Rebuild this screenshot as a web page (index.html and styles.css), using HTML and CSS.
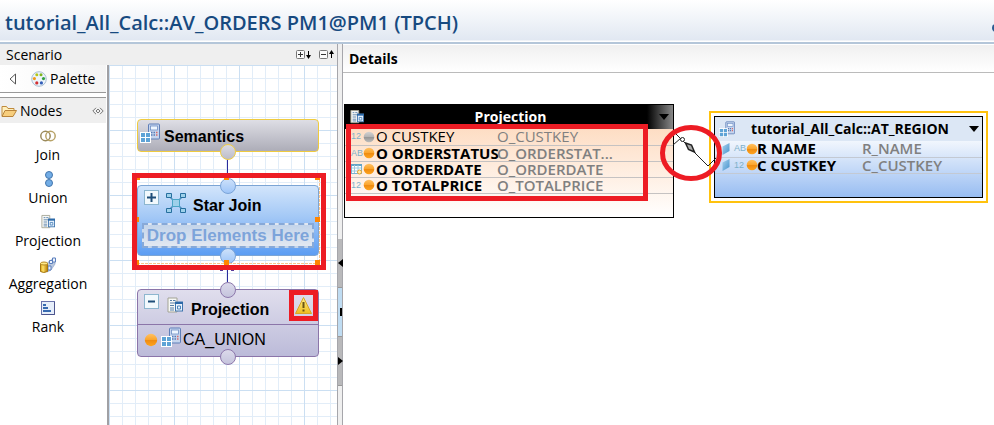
FILE: index.html
```html
<!DOCTYPE html>
<html lang="en">
<head>
<meta charset="utf-8">
<title>tutorial_All_Calc::AV_ORDERS PM1@PM1 (TPCH)</title>
<link rel="stylesheet" href="styles.css">
</head>
<body>
<svg class="defs" width="0" height="0" aria-hidden="true">
  <defs>
    <linearGradient id="g-orange" x1="0" y1="0" x2="0" y2="1"><stop offset="0" stop-color="#ffc163"/><stop offset=".48" stop-color="#fba52c"/><stop offset=".5" stop-color="#ee8a10"/><stop offset="1" stop-color="#ffa51f"/></linearGradient>
    <linearGradient id="g-gray" x1="0" y1="0" x2="0" y2="1"><stop offset="0" stop-color="#d2d2d2"/><stop offset=".48" stop-color="#b5b5b5"/><stop offset=".5" stop-color="#949494"/><stop offset="1" stop-color="#bcbcbc"/></linearGradient>
    <linearGradient id="g-steel" x1="0" y1="0" x2="0" y2="1"><stop offset="0" stop-color="#dcdce4"/><stop offset="1" stop-color="#bcbcc8"/></linearGradient>
    <linearGradient id="g-blue" x1="0" y1="0" x2="0" y2="1"><stop offset="0" stop-color="#cfe2fa"/><stop offset="1" stop-color="#9cc4f8"/></linearGradient>
    <linearGradient id="g-lilac" x1="0" y1="0" x2="0" y2="1"><stop offset="0" stop-color="#dcdaeb"/><stop offset="1" stop-color="#c4c3dc"/></linearGradient>
    <linearGradient id="g-para" x1="0" y1="0" x2="1" y2="1"><stop offset="0" stop-color="#a9d2ee"/><stop offset="1" stop-color="#4391cc"/></linearGradient>
    <linearGradient id="g-warn" x1="0" y1="0" x2="0" y2="1"><stop offset="0" stop-color="#fff08a"/><stop offset="1" stop-color="#eebc1d"/></linearGradient>
    <linearGradient id="g-gold" x1="0" y1="0" x2="1" y2="0"><stop offset="0" stop-color="#d79c10"/><stop offset=".35" stop-color="#ffe36a"/><stop offset="1" stop-color="#b87c08"/></linearGradient>
    <symbol id="orange-dot" viewBox="0 0 12 12"><circle cx="6" cy="6" r="5.3" fill="url(#g-orange)"/></symbol>
    <symbol id="gray-dot" viewBox="0 0 12 12"><circle cx="6" cy="6" r="5.3" fill="url(#g-gray)"/></symbol>
    <symbol id="cube" viewBox="0 0 20 20">
      <rect x="8.5" y="1" width="11" height="15" rx="1" fill="#c6d5ee" stroke="#5f7fb8"/>
      <rect x="10.5" y="3" width="7" height="4" fill="#eef6ff" stroke="#6f8fc4" stroke-width=".8"/>
      <path d="M11 9.500h1.500M13.500 9.500H15M11 12h1.500M13.500 12H15" stroke="#577bb5" stroke-width="1.5"/><path d="M16 9.500h1.500M16 12h1.500" stroke="#d66b6b" stroke-width="1.5"/>
      <rect x="0" y="9" width="11" height="11" fill="#fff"/>
      <path d="M1 10h4v4H1zM6 10h4v4H6zM1 15h4v4H1zM6 15h4v4H6z" fill="#5ea3d6"/>
    </symbol>
    <symbol id="projection" viewBox="0 0 16 16">
      <path d="M1 .5h9v14H1z" fill="#f7f8f6" stroke="#a3a394"/>
      <path d="M3 3h2M6 3h2.500M3 5.500h5.500M3 8h4M3 10.500h4M3 12.500h4" stroke="#557fa8"/>
      <rect x="8.5" y="4.500" width="7" height="9" fill="#e9f4ff" stroke="#3e74ad"/>
      <path d="M8 5.500h8" stroke="#2c69a8" stroke-width="2"/>
      <path d="M10.500 8.500h3v3h-3z" fill="none" stroke="#4f85ba"/>
    </symbol>
    <symbol id="calendar" viewBox="0 0 12 12">
      <rect x=".5" y="1.500" width="10" height="9" fill="#fff" stroke="#7cb3d0"/><path d="M0 2h11" stroke="#64a4c6" stroke-width="2"/><path d="M3.500 2v8M7 2v8M1 5h9M1 8h9" stroke="#9cc8de"/><circle cx="8.5" cy="9" r="2" fill="#fff0b5" stroke="#e9a42c"/>
    </symbol>
    <symbol id="attr" viewBox="0 0 8 14"><path d="M.5 4.500L7.500 1v8L.5 13z" fill="url(#g-para)"/></symbol>
  </defs>
</svg>

<header class="titlebar">
  <h1>tutorial_All_Calc::AV_ORDERS PM1@PM1 (TPCH)</h1>
  <svg class="edge-icon" width="2" height="8" viewBox="0 0 2 8"><circle cx="4" cy="4" r="4" fill="#2b5b91"/></svg>
</header>

<main class="workbench">
  <section class="scenario">
    <div class="scenario-head">
      <h2>Scenario</h2>
      <div class="tools">
        <button type="button" aria-label="Expand all"><svg width="16" height="11" viewBox="0 0 16 11"><rect x=".5" y="1.500" width="8" height="8" rx="1" fill="#fafafa" stroke="#777"/><path d="M2 5.500h5M4.500 3v5" stroke="#333"/><path d="M12.500 2v6" stroke="#000"/><path d="M10 6h5l-2.500 4z"/></svg></button>
        <button type="button" aria-label="Collapse all"><svg width="16" height="11" viewBox="0 0 16 11"><rect x=".5" y="1.500" width="8" height="8" rx="1" fill="#fafafa" stroke="#777"/><path d="M2 5.500h5" stroke="#333"/><path d="M12.500 3v6" stroke="#000"/><path d="M10 5h5l-2.500-4z"/></svg></button>
      </div>
    </div>
    <div class="scenario-body">
      <nav class="palette">
        <button type="button" class="palette-head">
          <svg width="8" height="12" viewBox="0 0 8 12"><path d="M6.500 1v10L1 6z" fill="#fff" stroke="#555"/></svg>
          <svg width="16" height="16" viewBox="0 0 16 16"><circle cx="8" cy="8" r="7.3" fill="#edf4fb" stroke="#a9bfd3"/><circle cx="5.8" cy="3.8" r="1.5" fill="#b5c718"/><circle cx="10" cy="3.8" r="1.5" fill="#7eb51d"/><circle cx="3.4" cy="7.6" r="1.6" fill="#f19a1c"/><circle cx="12.5" cy="7.6" r="1.6" fill="#33a043"/><circle cx="5.8" cy="11.9" r="1.6" fill="#d23131"/><circle cx="10.4" cy="11.9" r="1.6" fill="#315db8"/></svg>
          <span>Palette</span>
        </button>
        <button type="button" class="drawer">
          <svg width="16" height="14" viewBox="0 0 16 14"><path d="M1 12V2.500h4.500l1.500 2h6V7" fill="#fff0bd" stroke="#c08a3c"/><path d="M1 12.500L4 6.500h11.500l-3.500 6z" fill="#f7ce7d" stroke="#b9843a"/></svg>
          <span>Nodes</span>
          <svg class="pin" width="12" height="8" viewBox="0 0 12 8"><path d="M4 .8L.8 4 4 7.200M8 .8L11.200 4 8 7.200M6 2L4 4l2 2 2-2z" fill="none" stroke="#777"/></svg>
        </button>
        <div class="tools-list">
          <button type="button" class="tool"><svg width="18" height="16" viewBox="0 0 18 16"><g fill="none"><circle cx="6.5" cy="8" r="4.7" stroke="#9a8a5c" stroke-width="1.5"/><circle cx="11.5" cy="8" r="4.7" stroke="#b8a368" stroke-width="1.5"/></g></svg>Join</button>
          <button type="button" class="tool"><svg width="16" height="16" viewBox="0 0 16 16"><g fill="#72ade6" stroke="#4476ac"><circle cx="9" cy="4" r="3.5"/><circle cx="9" cy="12" r="3.5"/></g></svg>Union</button>
          <button type="button" class="tool"><svg width="14" height="16"><use href="#projection" width="14" height="16"/></svg>Projection</button>
          <button type="button" class="tool"><svg width="16" height="16" viewBox="0 0 16 16"><path d="M7 6l4-3 4-2v6l-4 6-4 2z" fill="#b9c8df" stroke="#91a4c7" stroke-width=".7"/><path d="M9.500 3.500h3v3h-3zM12.500 1h3v4h-3zM8 9h3v4H8z" fill="#edf3fc" stroke="#5b7fbd"/><path d="M.5 6.500v8q3 2 7 0v-8" fill="url(#g-gold)" stroke="#a57711"/><ellipse cx="4" cy="6.5" rx="3.5" ry="1.5" fill="#ffe989" stroke="#b78920"/></svg>Aggregation</button>
          <button type="button" class="tool"><svg width="14" height="16" viewBox="0 0 14 16"><rect x=".5" y="1.500" width="13" height="13" fill="#e6eefa" stroke="#6a73ac"/><path d="M1 14.500h12.500V2" fill="none" stroke="#4c548d"/><path d="M2 5h3M2 8h5M2 11h8" stroke="#376ab0" stroke-width="2"/></svg>Rank</button>
        </div>
      </nav>

      <div class="canvas scenario-canvas">
        <div class="node semantics"><svg width="20" height="20"><use href="#cube"/></svg><span>Semantics</span></div>
        <div class="node star">
          <div class="node-title">
            <button type="button" class="toggle" aria-label="Expand"><svg width="9" height="9" viewBox="0 0 9 9"><path d="M0 4.500h9M4.500 0v9" stroke="#1f4e79" stroke-width="2"/></svg></button>
            <svg width="20" height="20" viewBox="0 0 20 20"><path d="M3 3l14 14M17 3L3 17" stroke="#4c8fbd" stroke-width="1.5"/><g fill="#9dd0ea" stroke="#266f9f"><path d="M.5.5h5v4h-5zM14.500.5h5v4h-5zM.5 15.500h5v4h-5zM14.500 15.500h5v4h-5z"/><path d="M6.500 6.500h7v7h-7z" stroke="#4aa5c6"/></g></svg>
            <span>Star Join</span>
          </div>
          <div class="drop">Drop Elements Here</div>
        </div>
        <div class="node projection">
          <div class="node-title">
            <button type="button" class="toggle" aria-label="Collapse"><svg width="9" height="9" viewBox="0 0 9 9"><path d="M1 4.500h7" stroke="#1f4e79" stroke-width="2"/></svg></button>
            <svg width="16" height="17"><use href="#projection" width="16" height="17"/></svg>
            <span>Projection</span>
          </div>
          <div class="source"><svg width="14" height="14"><use href="#orange-dot"/></svg><svg width="20" height="20"><use href="#cube"/></svg><span>CA_UNION</span></div>
        </div>
        <svg class="overlay" width="228" height="360" viewBox="109 65 228 360">
          <path d="M227.500 159v20M227.500 270v12" stroke="#2c2c9c"/>
          <path d="M220 270.500h3M231 270.500h3" stroke="#5a3c9c"/>
          <circle cx="228" cy="152" r="7.5" fill="url(#g-steel)" stroke="#efcd45"/>
          <g fill="url(#g-blue)" stroke="#7ba4d8"><circle cx="228" cy="186" r="7.5"/><circle cx="228" cy="256" r="7.5"/></g>
          <g fill="url(#g-lilac)" stroke="#8d78ac"><circle cx="228" cy="290" r="7.5"/><circle cx="228" cy="357" r="7.5"/></g>
          <path d="M137 263.500h182.500V179" fill="none" stroke="#f7c48c" stroke-dasharray="3 1"/>
          <path d="M136 177h4v3h-4zM224 177h5v3h-5zM315 177h5v3h-5zM136 217h3v5h-3zM315 217h5v5h-5zM136 260h3v5h-3zM224 260h5v5h-5zM315 260h5v5h-5z" fill="#ff8500"/>
          <rect x="134.5" y="175.500" width="189" height="92" fill="none" stroke="#ed1c24" stroke-width="5"/>
          <path d="M303.500 297.500l8 16h-16z" fill="url(#g-warn)" stroke="#d8a526" stroke-linejoin="round"/><path d="M303.500 302v6M303.500 309.500v2" stroke="#6b5413" stroke-width="2"/>
          <rect x="291.5" y="292.500" width="24" height="26" fill="none" stroke="#ed1c24" stroke-width="5"/>
        </svg>
      </div>
    </div>
  </section>

  <div class="sash">
    <button type="button" aria-label="Shrink"><svg width="5" height="8" viewBox="0 0 5 8"><path d="M5 0v8L0 4z"/></svg></button>
    <button type="button" class="reset" aria-label="Reset"><svg width="5" height="8" viewBox="0 0 5 8"><path d="M2 0h2v8H2z"/></svg></button>
    <button type="button" aria-label="Grow"><svg width="5" height="8" viewBox="0 0 5 8"><path d="M0 0v8l5-4z"/></svg></button>
  </div>

  <section class="details">
    <h2>Details</h2>
    <div class="canvas">
      <div class="entity proj-entity">
        <div class="entity-head"><svg width="14" height="14"><use href="#projection"/></svg><span>Projection</span><button type="button" aria-label="Projection menu"><svg width="10" height="6" viewBox="0 0 10 6"><path d="M0 0h10L5 6z"/></svg></button></div>
        <table>
          <tr class="plain"><td class="type">12</td><td class="dot"><svg width="12" height="12"><use href="#gray-dot"/></svg></td><td class="name">O CUSTKEY</td><td class="map">O_CUSTKEY</td></tr>
          <tr><td class="type">AB</td><td class="dot"><svg width="12" height="12"><use href="#orange-dot"/></svg></td><td class="name">O ORDERSTATUS</td><td class="map">O_ORDERSTAT...</td></tr>
          <tr><td class="type"><svg width="12" height="12"><use href="#calendar"/></svg></td><td class="dot"><svg width="12" height="12"><use href="#orange-dot"/></svg></td><td class="name">O ORDERDATE</td><td class="map">O_ORDERDATE</td></tr>
          <tr><td class="type">12</td><td class="dot"><svg width="12" height="12"><use href="#orange-dot"/></svg></td><td class="name">O TOTALPRICE</td><td class="map">O_TOTALPRICE</td></tr>
        </table>
      </div>
      <div class="region-frame">
        <div class="entity region-entity">
          <div class="entity-head"><svg width="16" height="16"><use href="#cube"/></svg><span>tutorial_All_Calc::AT_REGION</span><button type="button" aria-label="Region menu"><svg width="10" height="6" viewBox="0 0 10 6"><path d="M0 0h10L5 6z"/></svg></button></div>
          <table>
            <tr><td class="attr"><svg width="8" height="14"><use href="#attr"/></svg></td><td class="type">AB</td><td class="dot"><svg width="12" height="12"><use href="#orange-dot"/></svg></td><td class="name">R NAME</td><td class="map">R_NAME</td></tr>
            <tr><td class="attr"><svg width="8" height="14"><use href="#attr"/></svg></td><td class="type">12</td><td class="dot"><svg width="12" height="12"><use href="#orange-dot"/></svg></td><td class="name">C CUSTKEY</td><td class="map">C_CUSTKEY</td></tr>
          </table>
        </div>
      </div>
      <svg class="overlay" width="651" height="352" viewBox="343 73 651 352">
        <path d="M675 133l33 33 8-8M673 145l8-7" fill="none" stroke="#222"/>
        <circle cx="682.5" cy="139.500" r="2" fill="#fff" stroke="#222"/>
        <path d="M685.500 143l6 2 3 7-6-2.500z" fill="#aaa" stroke="#222" stroke-width="1.5"/>
        <rect x="348.5" y="126.500" width="297" height="72" fill="none" stroke="#ed1c24" stroke-width="5"/>
        <ellipse cx="691" cy="153" rx="28.5" ry="25.5" fill="none" stroke="#ed1c24" stroke-width="5"/>
      </svg>
    </div>
  </section>
</main>
</body>
</html>
```
FILE: styles.css
```css
* { box-sizing: border-box; }

body {
  margin: 0;
  min-height: 100vh;
  display: flex;
  flex-direction: column;
  background: #fff;
  color: #000;
  font: 14px/20px "Open Sans", "Noto Sans", sans-serif;
}

h1, h2 { margin: 0; }
svg { display: block; flex: none; }
.defs { position: absolute; }

button {
  margin: 0;
  padding: 0;
  border: 0;
  background: none;
  color: inherit;
  font: inherit;
}

.titlebar {
  display: flex;
  align-items: center;
  justify-content: space-between;
  height: 44px;
  padding: 4px 0 0 5px;
  border-bottom: 2px solid #b4c6d9;
  background: linear-gradient(#fff, #e1e8f2 40px, #fff 41px);
}
.titlebar h1 {
  color: #174a80;
  font-size: 20px;
  line-height: 26px;
  font-weight: 600;
  white-space: nowrap;
}
.edge-icon { margin-top: 10px; }

.workbench {
  flex: 1;
  display: grid;
  grid-template-columns: 337px 6px minmax(0, 1fr);
}

.scenario { display: flex; flex-direction: column; }
.scenario-head {
  display: flex;
  align-items: center;
  justify-content: space-between;
  height: 21px;
  padding: 0 2px 0 6px;
  background: #efefef;
}
.scenario-head h2 { font-size: 14px; font-weight: 400; }
.tools { display: flex; gap: 7px; }

.scenario-body { flex: 1; display: flex; }
.palette {
  width: 109px;
  padding-right: 1px;
  border-right: 2px solid #a0a0a4;
}
.palette-head {
  display: flex;
  align-items: center;
  gap: 3px;
  width: 100%;
  height: 28px;
  padding-left: 9px;
  border-bottom: 1px solid #999;
  background: linear-gradient(90deg, #fff, #f4f4f4);
}
.palette-head svg:first-child { margin-right: 11px; }
.drawer {
  display: flex;
  align-items: center;
  gap: 3px;
  width: 100%;
  height: 26px;
  margin-top: 4px;
  padding: 0 2px 0 1px;
  border-top: 1px solid #999;
  background: #efefef;
}
.drawer .pin { margin-left: auto; }
.tools-list {
  display: flex;
  flex-direction: column;
  gap: 5px;
  padding: 5px 10px 0 0;
}
.tool {
  display: flex;
  flex-direction: column;
  align-items: center;
  line-height: 22px;
}

.canvas { position: relative; flex: 1; }
.overlay { position: absolute; left: 0; top: 0; pointer-events: none; }
.scenario-canvas {
  background:
    linear-gradient(90deg, #cbdff2 1px, transparent 1px) 0 0 / 65px 65px,
    linear-gradient(#cbdff2 1px, transparent 1px) 0 0 / 65px 65px,
    linear-gradient(90deg, #e2edf8 1px, transparent 1px) 0 0 / 13px 13px,
    linear-gradient(#e2edf8 1px, transparent 1px) 0 0 / 13px 13px;
}

.node {
  position: absolute;
  left: 28px;
  width: 182px;
  border: 1px solid;
  border-radius: 4px;
  font: 700 16px/20px "Liberation Sans", Arial, sans-serif;
}
.semantics {
  top: 54px;
  height: 33px;
  display: flex;
  gap: 4px;
  padding: 3px 2px;
  border-color: #efcb3f;
  background: linear-gradient(#dedee5, #adadb8);
}
.semantics span { padding-top: 4px; }
.star {
  top: 120px;
  height: 71px;
  border-color: #7ca5d5;
  background: linear-gradient(#d2e5fb, #a3c8f6 45%, #5c9df3);
}
.projection {
  top: 224px;
  height: 68px;
  border-color: #8b75a9;
  background: linear-gradient(#e0deed, #bcbbd9);
}
.node-title {
  display: flex;
  align-items: flex-start;
  gap: 7px;
  height: 35px;
  padding: 4px 6px;
}
.node-title > svg { margin-top: 3px; }
.node-title span { padding-top: 6px; }
.projection .node-title { gap: 8px; border-bottom: 1px solid #8b75a9; }
.toggle {
  display: grid;
  place-items: center;
  width: 15px;
  height: 15px;
  border: 1px solid #8db6cf;
  background: #f2f9fd;
}
.drop {
  width: 172px;
  height: 25px;
  margin: 2px 4px;
  border: 2px dashed #87a9d8;
  background: linear-gradient(#c3d4ea, #e2e8f1);
  color: #7da4da;
  font-size: 17px;
  line-height: 21px;
  text-align: center;
  white-space: nowrap;
}
.source {
  display: flex;
  align-items: center;
  gap: 2px;
  height: 30px;
  padding-left: 6px;
  font-weight: 400;
}
.source svg + svg { margin: 0 0 6px 1px; }

.sash {
  display: flex;
  flex-direction: column;
  padding-top: 195px;
  border: solid #a6a6ab;
  border-width: 0 1px;
  background: #efefef;
}
.sash button {
  display: grid;
  place-items: center;
  height: 49px;
  background: #b9b9bb;
  border-bottom: 1px solid #999;
}
.sash .reset { background: #bfdcf2; }

.details { display: flex; flex-direction: column; min-width: 0; }
.details h2 {
  height: 29px;
  padding: 5px 6px;
  border-top: 1px solid #fff;
  border-bottom: 1px solid #bbb;
  background: linear-gradient(#f0f0f0, #fff);
  font-size: 14px;
  line-height: 18px;
}

.entity { border: 1px solid #000; }
.entity-head {
  display: flex;
  align-items: center;
  height: 24px;
  font-weight: 700;
}
.entity-head span { flex: 1; text-align: center; white-space: nowrap; }
.entity-head button { display: grid; place-items: center; height: 24px; }
.proj-entity {
  position: absolute;
  left: 1px;
  top: 31px;
  width: 330px;
  height: 114px;
  background: linear-gradient(#fdd4b4, #fff);
}
.proj-entity .entity-head { padding-left: 5px; background: #000; color: #fff; }
.proj-entity .entity-head span { padding-left: 10px; }
.proj-entity .entity-head button {
  width: 26px;
  padding-left: 8px;
  background: linear-gradient(90deg, #000, #888);
}
.region-frame {
  position: absolute;
  left: 366px;
  top: 38px;
  width: 279px;
  height: 92px;
  padding: 3px;
  border: 2px solid #ffc20e;
  background: #fff;
}
.region-entity { height: 82px; background: linear-gradient(#fff 24px, #f1f6fd 24px, #98bdf2); }
.region-entity .entity-head { padding-left: 4px; background: #dce7f5; }
.region-entity .entity-head button { width: 17px; }

table { width: 100%; border-collapse: collapse; table-layout: fixed; }
td {
  height: 16px;
  padding: 0;
  border-bottom: 1px solid #c5c2c2;
  font-size: 15px;
  line-height: 15px;
  font-weight: 700;
  white-space: nowrap;
}
.type {
  width: 18px;
  padding-left: 6px;
  color: #7eb0c9;
  font: 400 9px/15px "Liberation Sans", Arial, sans-serif;
}
.dot { width: 13px; }
.name { width: 121px; }
.map { color: #808080; font-weight: 600; }
.plain td { font-weight: 400; }
.attr { width: 19px; padding-left: 7px; }
.region-entity .type { width: 12px; padding-left: 0; }
.region-entity .dot { width: 11px; }
.region-entity .name { width: 105px; }
.region-entity td { border-color: #c3c9d3; }
```
